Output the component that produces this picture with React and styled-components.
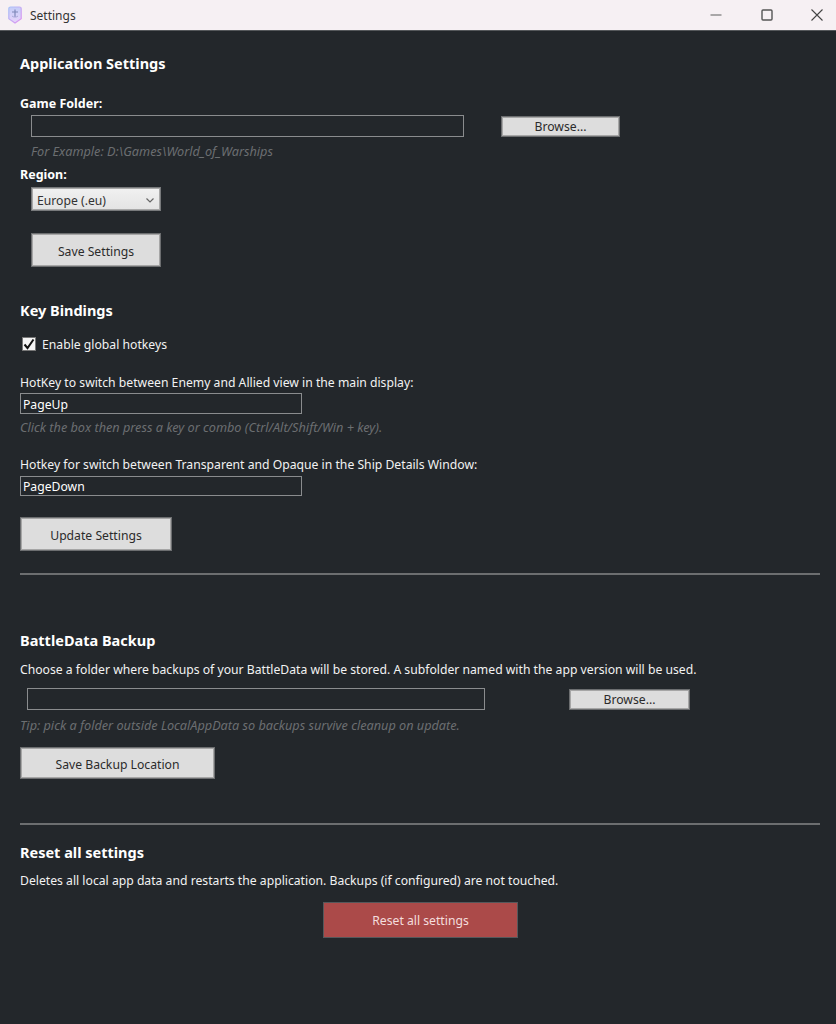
import React from "react";
import styled, { createGlobalStyle } from "styled-components";

const Global = createGlobalStyle`
  html, body { margin: 0; padding: 0; background: #23272b; }
  body { font-family: "Noto Sans", "Open Sans", sans-serif; }
  * { box-sizing: border-box; }
`;

const Window = styled.div`
  width: 836px;
  height: 1024px;
  background: #23272b;
  display: flex;
  flex-direction: column;
  overflow: hidden;
`;

const TitleBar = styled.div`
  height: 31px;
  flex: none;
  background: #f6f0f3;
  border-bottom: 1px solid #55585b;
  display: flex;
  align-items: center;
  padding-left: 8px;
`;

const TitleText = styled.span`
  font-size: 12px;
  color: #333;
  margin-left: 8px;
`;

const WindowControls = styled.div`
  margin-left: auto;
  display: flex;
  align-items: center;
  padding: 0 13px 1px 0;
  gap: 38.5px;
`;

const Content = styled.main`
  flex: 1;
  padding: 0 16px 0 20px;
  display: flex;
  flex-direction: column;
`;

const Heading = styled.h2`
  margin: ${(p) => p.$top}px 0 0;
  font-size: 14.5px;
  line-height: 20px;
  font-weight: 700;
  color: #fff;
`;

const FieldLabel = styled.div`
  margin-top: ${(p) => p.$top}px;
  padding-top: 2px;
  font-size: 12.5px;
  line-height: 16px;
  font-weight: 700;
  color: #fff;
`;

const Text = styled.div`
  margin-top: ${(p) => p.$top}px;
  padding-top: 2px;
  font-size: 12.2px;
  line-height: 16px;
  color: #f2f2f2;
`;

const Hint = styled.div`
  margin: ${(p) => p.$top}px 0 0 ${(p) => p.$indent || 0}px;
  font-size: 12.7px;
  line-height: 18px;
  font-style: italic;
  color: #6b6e71;
`;

const PathRow = styled.div`
  margin: ${(p) => p.$top}px 0 0 ${(p) => p.$indent}px;
  display: flex;
  align-items: flex-end;
`;

const TextBox = styled.div`
  width: ${(p) => p.$w}px;
  height: ${(p) => p.$h}px;
  margin-top: ${(p) => p.$top || 0}px;
  border: 1px solid #8a8c8e;
  color: #fff;
  font-size: 12.2px;
  padding: 2px 0 0 2px;
  line-height: ${(p) => p.$h - 4}px;
`;

const Button = styled.button`
  display: block;
  width: ${(p) => p.$w}px;
  height: ${(p) => p.$h}px;
  margin: ${(p) => p.$top || 0}px 0 0 ${(p) => p.$left || 0}px;
  padding: ${(p) => (p.$h < 25 ? 0 : 2)}px 0 0;
  background: #dddddd;
  border: 1px solid #6c6e70;
  box-shadow: inset 0 0 0 1px #a6a6a6;
  color: #2b2b2b;
  font-family: inherit;
  font-size: 12.2px;
`;

const ResetButton = styled(Button)`
  background: #ab4a49;
  border: 1px solid #55585b;
  box-shadow: none;
  color: #f4dede;
  align-self: flex-start;
  padding-top: 0;
`;

const Select = styled.div`
  margin: ${(p) => p.$top}px 0 0 ${(p) => p.$left}px;
  width: 130px;
  height: 24px;
  background: linear-gradient(#f1f1f1, #e3e3e3);
  border: 1px solid #77797b;
  box-shadow: inset 0 0 0 1px #a8a8a8;
  color: #333;
  font-size: 12.2px;
  display: flex;
  align-items: center;
  justify-content: space-between;
  padding: 2px 6px 0 5px;
`;

const CheckRow = styled.label`
  margin: ${(p) => p.$top}px 0 0 2px;
  display: flex;
  align-items: center;
  gap: 6px;
  font-size: 12.2px;
  line-height: 16px;
  height: 18px;
  color: #f2f2f2;
`;

const CheckLabel = styled.span`
  padding-top: 2px;
`;

const CheckBox = styled.span`
  width: 14px;
  height: 14px;
  background: #f4f4f4;
  border: 1px solid #777;
  display: flex;
  align-items: center;
  justify-content: center;
`;

const Divider = styled.hr`
  margin: ${(p) => p.$top}px 0 0;
  border: 0;
  height: 2px;
  background: #6c6e70;
`;

const AppIcon = () => (
  <svg width="14" height="18" viewBox="0 0 14 18">
    <defs>
      <linearGradient id="sh" x1="0" y1="0" x2="1" y2="1">
        <stop offset="0" stopColor="#a8c4f8" />
        <stop offset="1" stopColor="#e090f0" />
      </linearGradient>
      <linearGradient id="sf" x1="0" y1="0" x2="0" y2="1">
        <stop offset="0" stopColor="#c4cdf8" />
        <stop offset="1" stopColor="#e8d4fa" />
      </linearGradient>
    </defs>
    <path d="M2.5 1h9A1.7 1.7 0 0 1 13.2 2.7v10L7 17 .8 12.7v-10A1.7 1.7 0 0 1 2.5 1z" fill="url(#sf)" stroke="url(#sh)" strokeWidth="1.2" />
    <path d="M7 3.5v7.5M4 6h6" fill="none" stroke="#7f88b8" strokeWidth="1.2" />
    <path d="M4 10c1 1.4 5 1.4 6 0" fill="none" stroke="#a8a8d8" strokeWidth="1" />
  </svg>
);

const MinimizeIcon = () => (
  <svg width="12" height="12" viewBox="0 0 12 12"><path d="M0.5 6h11" stroke="#777" strokeWidth="1.2" /></svg>
);
const MaximizeIcon = () => (
  <svg width="12" height="12" viewBox="0 0 12 12"><rect x="1" y="1" width="10" height="10" rx="1" fill="none" stroke="#555" strokeWidth="1.4" /></svg>
);
const CloseIcon = () => (
  <svg width="12" height="12" viewBox="0 0 12 12"><path d="M0.5 0.5l11 11M11.5 0.5l-11 11" stroke="#444" strokeWidth="1.1" /></svg>
);
const Chevron = () => (
  <svg width="8" height="5" viewBox="0 0 8 5"><path d="M0.5 0.5L4 4l3.5-3.5" fill="none" stroke="#666" strokeWidth="1.2" /></svg>
);
const Tick = () => (
  <svg width="12" height="12" viewBox="0 0 12 12"><path d="M1.5 6.5L4.5 10l6-8.5" fill="none" stroke="#111" strokeWidth="2" /></svg>
);

export default function App() {
  return (
    <Window>
      <Global />
      <TitleBar>
        <AppIcon />
        <TitleText>Settings</TitleText>
        <WindowControls>
          <MinimizeIcon />
          <MaximizeIcon />
          <CloseIcon />
        </WindowControls>
      </TitleBar>
      <Content>
        <Heading $top={22}>Application Settings</Heading>
        <FieldLabel $top={21}>Game Folder:</FieldLabel>
        <PathRow $top={3} $indent={11}>
          <TextBox $w={433} $h={22} />
          <Button $w={119} $h={21} $left={37}>Browse...</Button>
        </PathRow>
        <Hint $top={5} $indent={11}>For Example: D:\Games\World_of_Warships</Hint>
        <FieldLabel $top={5}>Region:</FieldLabel>
        <Select $top={4} $left={11}>Europe (.eu)<Chevron /></Select>
        <Button $w={130} $h={34} $left={11} $top={22}>Save Settings</Button>
        <Heading $top={33}>Key Bindings</Heading>
        <CheckRow $top={15}><CheckBox><Tick /></CheckBox><CheckLabel>Enable global hotkeys</CheckLabel></CheckRow>
        <Text $top={20}>HotKey to switch between Enemy and Allied view in the main display:</Text>
        <TextBox $w={282} $h={21} $top={2}>PageUp</TextBox>
        <Hint $top={4}>Click the box then press a key or combo (Ctrl/Alt/Shift/Win + key).</Hint>
        <Text $top={19}>Hotkey for switch between Transparent and Opaque in the Ship Details Window:</Text>
        <TextBox $w={282} $h={20} $top={3}>PageDown</TextBox>
        <Button $w={152} $h={34} $top={21}>Update Settings</Button>
        <Divider $top={22} />
        <Heading $top={55}>BattleData Backup</Heading>
        <Text $top={10}>Choose a folder where backups of your BattleData will be stored. A subfolder named with the app version will be used.</Text>
        <PathRow $top={10} $indent={7}>
          <TextBox $w={458} $h={22} />
          <Button $w={121} $h={21} $left={84}>Browse...</Button>
        </PathRow>
        <Hint $top={6}>Tip: pick a folder outside LocalAppData so backups survive cleanup on update.</Hint>
        <Button $w={195} $h={32} $top={13}>Save Backup Location</Button>
        <Divider $top={44} />
        <Heading $top={17}>Reset all settings</Heading>
        <Text $top={9}>Deletes all local app data and restarts the application. Backups (if configured) are not touched.</Text>
        <ResetButton $w={195} $h={36} $left={303} $top={13}>Reset all settings</ResetButton>
      </Content>
    </Window>
  );
}
